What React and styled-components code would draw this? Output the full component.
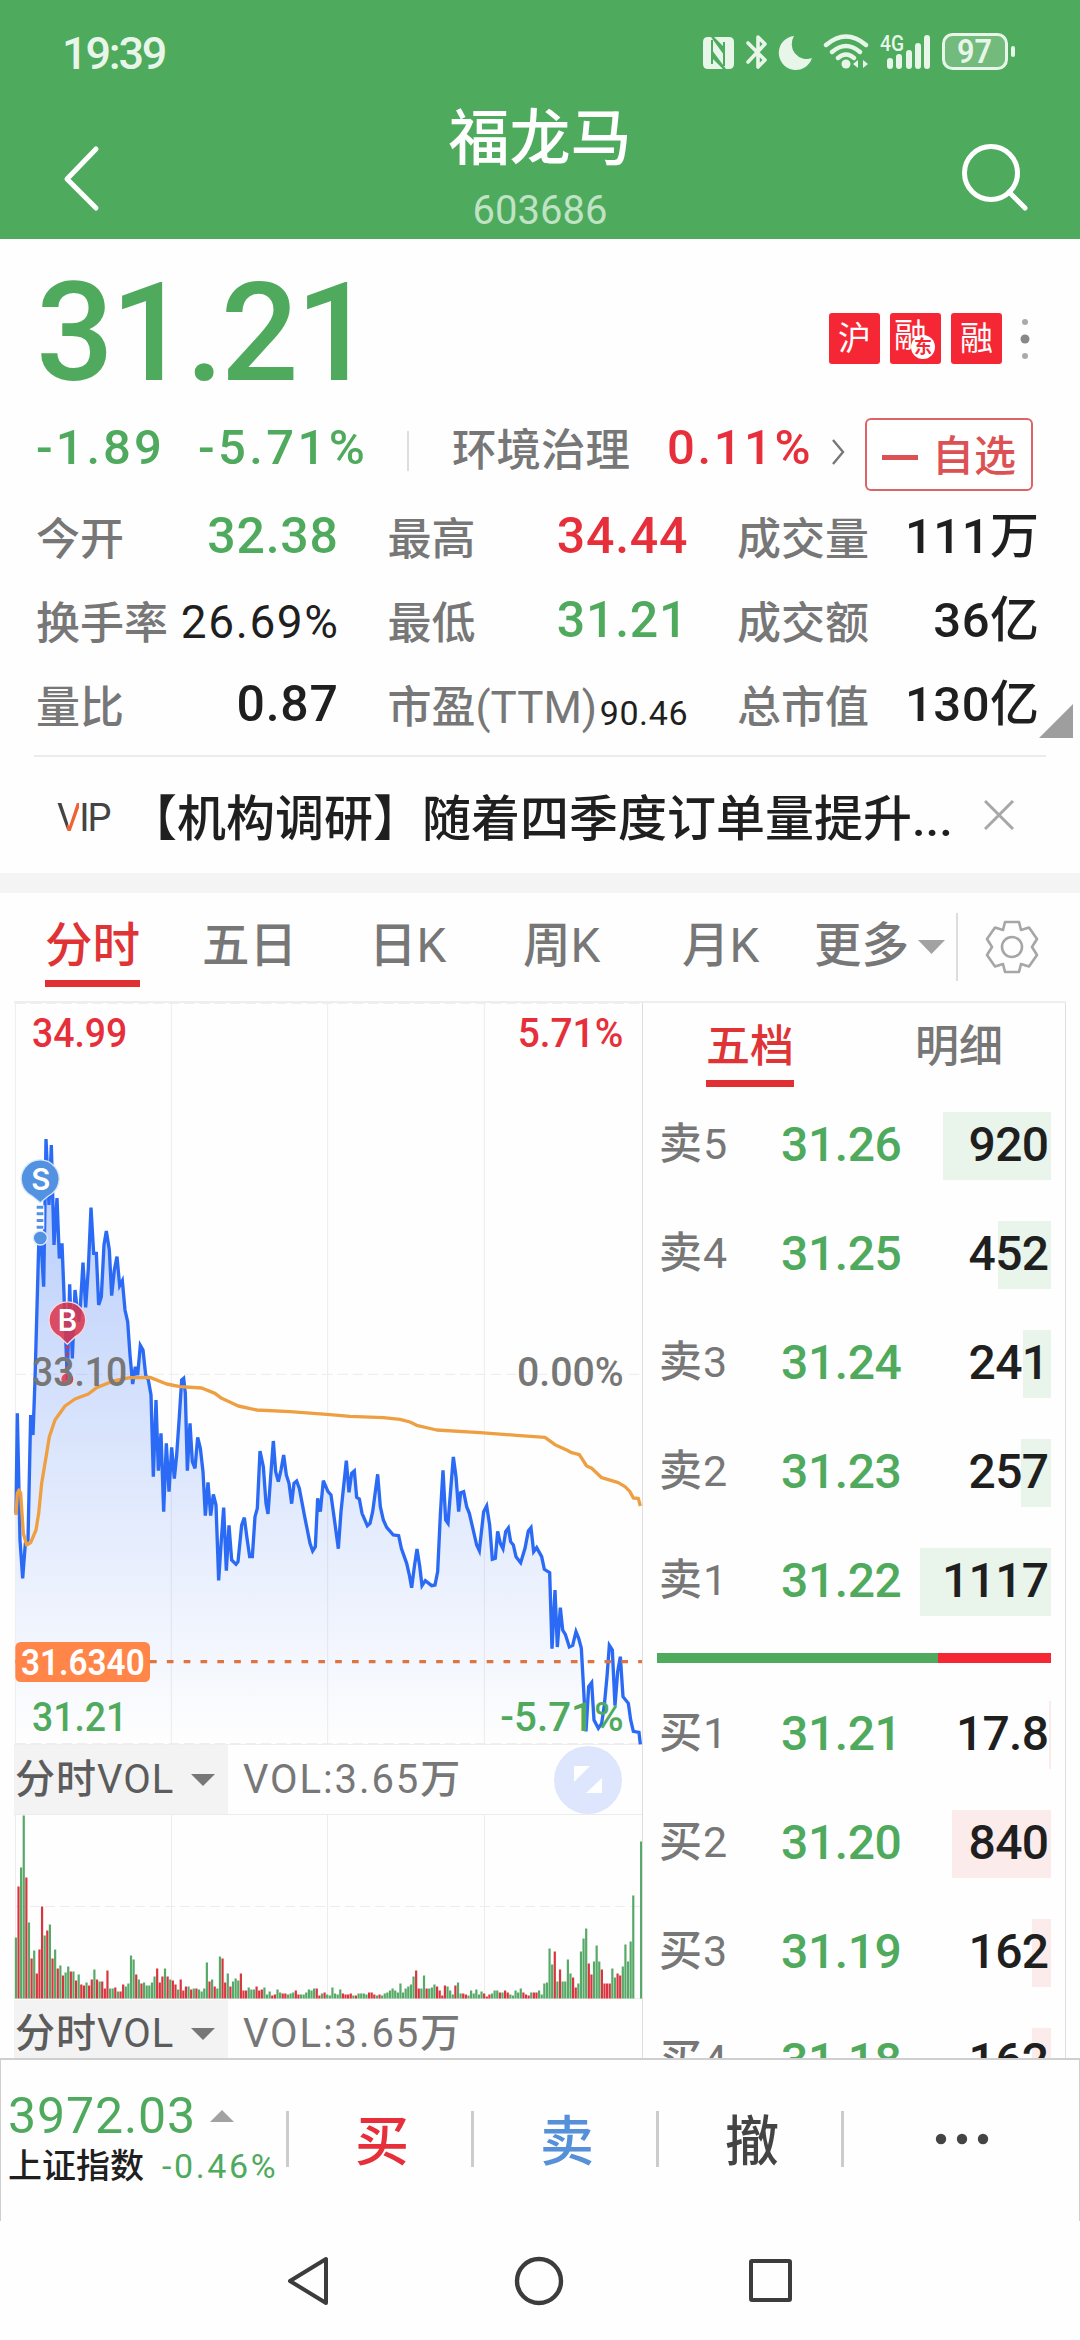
import React, { useState } from "react";
import styled, { createGlobalStyle } from "styled-components";

const GREEN = "#4faa5d";
const RED = "#e62f3a";
const GREY = "#777777";
const INK = "#1f1f1f";

const GlobalStyle = createGlobalStyle`
	* { box-sizing: border-box; }
	body {
		margin: 0;
		background: #fefefe;
		color: ${INK};
		font-family: Roboto, "Noto Sans CJK SC", sans-serif;
	}
	svg { display: block; flex: none; }
`;

const Page = styled.div`
	width: 1080px;
	height: 2340px;
	display: flex;
	flex-direction: column;
	overflow: hidden;
`;

// One piece of text; size, spacing and colour differ nearly everywhere
const Text = styled.span`
	font-size: ${(p) => p.$size}px;
	letter-spacing: ${(p) => p.$gap || 0}px;
	margin-right: ${(p) => -(p.$gap || 0)}px;
	color: ${(p) => p.$color || INK};
	font-weight: ${(p) => p.$weight || 400};
	line-height: ${(p) => p.$line || p.$size}px;
	white-space: nowrap;
`;

/* ---------- header ---------- */

const Header = styled.header`
	height: 239px;
	background: #4eaa5c;
`;

const StatusBar = styled.div`
	height: 106px;
	padding: 0 65px 0 62px;
	display: flex;
	align-items: center;
	justify-content: space-between;
`;

const StatusIcons = styled.div`
	display: flex;
	align-items: center;
`;

const TitleBar = styled.div`
	height: 133px;
	padding: 0 52px 0 62px;
	display: flex;
	justify-content: space-between;
`;

const Title = styled.div`
	display: flex;
	flex-direction: column;
	align-items: center;
	gap: 20px;
	margin: 2px 0 0 18px;
`;

const BackIcon = styled.svg`
	margin-top: 38px;
`;

const SearchIcon = styled.svg`
	margin-top: 35px;
`;

/* ---------- quote ---------- */

const Quote = styled.section`
	position: relative;
	height: 516px;
`;

const PriceRow = styled.div`
	height: 179px;
	padding: 10px 48px 0 36px;
	display: flex;
	align-items: center;
	justify-content: space-between;
`;

const Badges = styled.div`
	display: flex;
	align-items: center;
	gap: 10px;
	margin-top: 10px;
`;

const Badge = styled.div`
	position: relative;
	width: 51px;
	height: 51px;
	border-radius: 3px;
	background: #f62734;
	color: #fff;
	font-size: 33px;
	line-height: 51px;
	text-align: center;
	${(p) => p.$shifted && "padding-right: 10px; line-height: 45px;"}
`;

const BadgeDot = styled.span`
	position: absolute;
	right: 6px;
	bottom: 5px;
	width: 24px;
	height: 24px;
	border-radius: 50%;
	background: #fff;
	color: #f62734;
	font-size: 18px;
	font-weight: 700;
	line-height: 24px;
`;

const Dots = styled.svg`
	margin-left: 6px;
`;

const ChangeRow = styled.div`
	height: 73px;
	padding: 0 47px 0 36px;
	display: flex;
	align-items: flex-start;
`;

const Change = styled.div`
	width: ${(p) => p.$width}px;
	flex: none;
`;

const VLine = styled.i`
	flex: none;
	width: ${(p) => p.$w || 2}px;
	height: ${(p) => p.$h}px;
	background: ${(p) => p.$color || "#dddddd"};
`;

const ChangeDivider = styled(VLine)`
	margin: 13px 43px 0 0;
`;

const FavButton = styled.button`
	margin: 0 0 0 auto;
	width: 168px;
	height: 73px;
	padding: 5px 0 0 15px;
	display: flex;
	align-items: center;
	gap: 14px;
	border: 2px solid #dd6365;
	border-radius: 6px;
	background: #fff;
	font-family: inherit;
`;

const Minus = styled.i`
	width: 36px;
	height: 5px;
	background: #dc5254;
`;

const Stats = styled.div`
	margin: 2px 42px 0 36px;
	display: grid;
	grid-template-columns: 302px 300px 302px;
	column-gap: 49.5px;
	grid-auto-rows: 84px;
`;

const Stat = styled.div`
	display: flex;
	align-items: center;
	justify-content: space-between;
`;

const StatLabel = styled(Text)`
	position: relative;
	top: 5px;
`;

const StatValue = styled(Text)`
	position: relative;
	top: ${(p) => (p.$drop || 0) + 1}px;
`;

const Corner = styled.svg`
	position: absolute;
	left: 1039px;
	top: 465px;
`;

const News = styled.div`
	height: 118px;
	margin: 0 34px;
	padding-left: 23px;
	border-top: 2px solid #ececec;
	display: flex;
	align-items: center;
`;

const NewsText = styled(Text)`
	margin: 9px auto 0 17px;
`;

const Vip = styled.div`
	width: 54px;
	height: 40px;
	margin-top: 6px;
	display: flex;
	align-items: center;
	color: #444;
	font-size: 38px;
	font-weight: 400;
	letter-spacing: -2px;
	line-height: 40px;
`;

const VipV = styled.span`
	background: linear-gradient(100deg, #444 52%, #ee6236 53%);
	background-clip: text;
	-webkit-background-clip: text;
	color: transparent;
`;

const Band = styled.div`
	height: 20px;
	background: #f4f4f4;
`;

/* ---------- period tabs ---------- */

const Tabs = styled.nav`
	height: 108px;
	padding-left: 45px;
	display: flex;
	align-items: center;
`;

const Tab = styled.div`
	width: ${(p) => p.$width}px;
	height: 108px;
	padding-top: 30px;
	flex: none;
`;

const TabLabel = styled.span`
	display: inline-block;
	height: 64px;
	font-size: 47.5px;
	line-height: 47px;
	font-weight: ${(p) => (p.$active ? 500 : 450)};
	color: ${(p) => (p.$active ? "#df3336" : GREY)};
	border-bottom: ${(p) => (p.$active ? "7px solid #e03033" : "none")};
`;

const MoreTab = styled(Tab)`
	display: flex;
	gap: 9px;
`;

const MoreArrow = styled.svg`
	margin-top: 17px;
`;

const Gear = styled.svg`
	margin-left: 26px;
`;

/* ---------- chart and order book ---------- */

const Board = styled.main`
	height: 1057px;
	margin: 0 14px;
	border-top: 2px solid #eeeeee;
	display: flex;
	overflow: hidden;
`;

const Charts = styled.div`
	width: 628px;
	flex: none;
	margin-top: -2px;
`;

const VolumeBar = styled.div`
	height: ${(p) => p.$height}px;
	border-bottom: 1px solid #ececec;
	display: flex;
	align-items: center;
`;

const VolumePicker = styled.div`
	width: 214px;
	height: 69px;
	padding: 0 13px 0 1px;
	margin-right: 15px;
	display: flex;
	align-items: center;
	justify-content: space-between;
	background: #f3f3f3;
`;

const Expand = styled.svg`
	margin-left: auto;
	margin-right: 20px;
`;

const Book = styled.aside`
	width: 424px;
	border: solid #dedede;
	border-width: 0 1px;
	padding: 0 14px;
`;

const BookTabs = styled.div`
	height: 109px;
	padding: 15px 48px 0 49px;
	display: flex;
	justify-content: space-between;
`;

const BookTab = styled.div`
	height: 69px;
	padding-top: 3px;
	font-size: 44px;
	line-height: 52px;
	font-weight: ${(p) => (p.$active ? 500 : 450)};
	color: ${(p) => (p.$active ? "#df3336" : GREY)};
	border-bottom: ${(p) => (p.$active ? "7px solid #e03033" : "none")};
`;

const Level = styled.div`
	height: 68px;
	margin-bottom: 41px;
	padding: 0 2px 3px 2px;
	display: grid;
	grid-template-columns: 122px 1fr auto;
	align-items: center;
	background: linear-gradient(${(p) => p.$tint}, ${(p) => p.$tint}) right / ${(p) => p.$bar}px 68px no-repeat;
`;

const Ratio = styled.div`
	height: 10px;
	margin: -4px 0 38px;
	display: grid;
	grid-template-columns: 281fr 113fr;
	background: #f62734;
	&::before {
		content: "";
		background: #4faa5d;
	}
`;

/* ---------- bottom ---------- */

const Toolbar = styled.footer`
	height: 163px;
	border: solid #cfcfcf;
	border-width: 2px 1px 0;
	display: grid;
	grid-template-columns: 285px repeat(3, 185px) 1fr;
`;

const Index = styled.div`
	padding: 29px 0 0 7px;
`;

const IndexLine = styled.div`
	display: flex;
	align-items: center;
	gap: ${(p) => p.$space}px;
	height: ${(p) => p.$height}px;
`;

const Action = styled.div`
	height: 56px;
	margin-top: 51px;
	padding: ${(p) => (p.$icon ? 0 : "8px 0 0 4px")};
	border-left: 3px solid #cccccc;
	display: flex;
	align-items: center;
	justify-content: center;
`;

const NavBar = styled.div`
	height: 119px;
	padding: 0 287px 0 285px;
	display: flex;
	align-items: center;
	justify-content: space-between;
`;

const stats = [
	{ label: "今开", value: "32.38", color: GREEN, size: 50, gap: 0.8 },
	{ label: "最高", value: "34.44", color: RED, size: 50, gap: 0.8 },
	{ label: "成交量", value: "111万", size: 49, gap: 0.5 },
	{ label: "换手率", value: "26.69%", size: 46, gap: 1.6, weight: 450, drop: 2 },
	{ label: "最低", value: "31.21", color: GREEN, size: 50, gap: 0.8 },
	{ label: "成交额", value: "36亿", size: 49, gap: 0.5 },
	{ label: "量比", value: "0.87", size: 50, gap: 0.8 },
	{ label: "市盈(TTM)", value: "90.46", size: 34, gap: 0.6, weight: 450, drop: 9 },
	{ label: "总市值", value: "130亿", size: 49, gap: 0.5 },
];

const asks = [
	["卖5", "31.26", "920", 108],
	["卖4", "31.25", "452", 53],
	["卖3", "31.24", "241", 28],
	["卖2", "31.23", "257", 30],
	["卖1", "31.22", "1117", 131],
];

const bids = [
	["买1", "31.21", "17.8", 2],
	["买2", "31.20", "840", 99],
	["买3", "31.19", "162", 19],
	["买4", "31.18", "162", 19],
];

const price =
	"48,1540 52,1240 60,1620 68,1735 76,1630 84,1620 92,1245 99,1305 105,1140 116,740 124,740 131,860 138,417 147,615 154,435 162,735 171,594 178,775 186,730 202,1140 209,853 217,1075 225,870 236,965 241,920 249,788 257,922 265,805 273,623 281,760 289,760 296,915 304,890 312,735 319,693 328,750 335,887 343,810 351,770 359,857 367,842 375,930 383,965 390,1065 398,1152 406,1100 413,1125 421,1036 429,1050 437,1125 445,1140 453,1185 460,1430 468,1200 475,1412 483,1300 491,1535 499,1330 507,1475 515,1342 523,1436 530,1365 538,1250 545,1140 551,1135 556,1180 562,1412 570,1270 577,1385 585,1405 593,1312 601,1345 609,1415 616,1547 624,1447 632,1547 640,1483 648,1515 656,1741 664,1620 671,1523 679,1712 687,1576 695,1680 708,1693 714,1685 725,1575 733,1553 741,1615 749,1670 757,1670 765,1550 772,1525 780,1353 790,1400 798,1510 804,1542 812,1430 820,1323 827,1415 835,1445 843,1410 851,1365 859,1425 867,1450 875,1511 882,1450 890,1443 898,1465 914,1550 930,1630 938,1653 946,1640 953,1495 961,1535 970,1442 984,1475 993,1485 1000,1535 1015,1646 1023,1535 1039,1382 1047,1477 1055,1420 1063,1413 1070,1492 1078,1497 1086,1540 1102,1577 1110,1570 1118,1535 1133,1423 1141,1520 1150,1560 1160,1582 1180,1605 1196,1607 1204,1645 1220,1690 1228,1725 1235,1763 1243,1700 1251,1647 1259,1698 1266,1757 1276,1742 1295,1757 1305,1755 1313,1715 1321,1545 1329,1411 1337,1560 1344,1570 1352,1470 1360,1371 1368,1430 1376,1535 1382,1478 1391,1475 1400,1520 1408,1540 1415,1570 1430,1635 1438,1652 1451,1535 1460,1518 1469,1575 1477,1678 1486,1675 1493,1594 1501,1630 1509,1646 1517,1595 1525,1584 1532,1625 1540,1635 1548,1670 1562,1688 1575,1645 1585,1593 1593,1583 1601,1655 1610,1643 1625,1670 1633,1708 1649,1718 1656,1946 1665,1770 1672,1941 1681,1823 1688,1890 1696,1903 1708,1941 1718,1936 1728,1895 1736,1915 1744,1945 1758,2194 1766,2060 1775,2048 1782,2160 1795,2185 1805,2170 1813,2115 1821,2030 1828,1936 1837,1950 1845,2117 1853,2015 1861,1970 1869,2090 1885,2110 1892,2160 1900,2194 1917,2197 1921,2233";

const average =
	"48,1545 52,1480 57,1470 62,1480 70,1600 80,1635 92,1628 108,1590 116,1540 125,1450 140,1360 148,1310 165,1260 195,1218 225,1197 265,1182 290,1163 340,1143 390,1133 450,1132 500,1152 540,1160 605,1164 645,1180 665,1195 715,1218 770,1230 870,1235 950,1241 990,1244 1050,1249 1150,1253 1200,1258 1230,1266 1250,1276 1310,1290 1440,1298 1550,1306 1635,1312 1665,1334 1700,1350 1715,1358 1738,1364 1760,1398 1775,1405 1805,1433 1855,1448 1875,1460 1890,1475 1900,1494 1915,1495 1921,1518";

// g = falling minute, r = rising minute, number = bar height
const volume =
	"g61 r112 g131 g183 r121 g76 r40 g48 r25 r49 r92 g63 r68 g74 r40 g49 r30 g33 r23 g26 g32 r27 g27 r18 g24 r14 r13 g16 r13 r19 g29 r19 g17 r17 r10 r28 g10 g10 r11 g7 r7 r14 g12 g15 g43 g39 r24 g19 r15 g16 g13 g13 g16 g22 r30 r16 r22 g30 r22 g19 r18 r14 g9 r19 r8 r12 g12 r9 g10 r10 g9 g7 g10 g36 r17 g19 r12 g10 g42 r40 r16 g25 r12 g17 g20 g18 r25 r8 r8 g11 g9 g9 r12 r8 r9 g11 g4 g7 r3 r4 g9 g6 r5 r5 g4 g5 g6 r8 r4 g4 g4 g6 g9 g8 g10 r10 r3 g5 r6 g4 g3 g11 g5 g4 g9 r5 r4 r4 r5 g3 r3 g5 g5 g5 g4 r6 r6 r4 g3 r4 g3 g5 g6 g8 g10 g8 g6 g15 g6 g10 g12 g14 g22 r28 r10 g10 g23 r10 g10 g11 g14 r12 r8 r3 r13 g12 g8 g4 r13 g16 g5 r5 r4 g3 g8 g5 g9 g4 g7 r5 r2 r4 g5 g8 g8 r6 g6 r8 r6 g4 g3 g8 g6 g10 r6 r4 r3 g6 r6 r6 g8 g4 g15 g16 g50 g34 r47 g17 r29 g17 g17 g39 g25 r21 r11 g15 g47 g60 g70 r35 r24 g37 g53 g37 r29 r15 r15 r15 g30 g21 r25 r23 g32 g54 g37 g57 g103 g0 g0 g157"
		.split(" ")
		.map((bar) => ({ color: bar[0] === "g" ? "#57a968" : "#d8363f", height: Number(bar.slice(1)) }));

function PriceChart() {
	return (
		<svg width="629" height="744" viewBox="42 3 1887 2232">
			<defs>
				<linearGradient id="fill" gradientUnits="userSpaceOnUse" x1="0" y1="420" x2="0" y2="2235">
					<stop offset="0" stopColor="#2b6af5" stopOpacity="0.34" />
					<stop offset="1" stopColor="#2b6af5" stopOpacity="0" />
				</linearGradient>
			</defs>
			<g stroke="#ececec" strokeWidth="3" fill="none">
				<path d="M46 3V2235M514 9V2235M983 9V2235M1453 9V2235M42 2234H1929" />
				<path d="M46 10H1926M46 1123H1926M46 2231H1926" strokeDasharray="32 14" />
			</g>
			<polygon points={`48,2235 ${price} 1921,2235`} fill="url(#fill)" />
			<polyline points={price} fill="none" stroke="#2b6af5" strokeWidth="10" />
			<polyline points={average} fill="none" stroke="#ee9f42" strokeWidth="10" strokeLinejoin="round" />
			<path d="M46 1985H1926" stroke="#de7440" strokeWidth="10" strokeDasharray="20 30.5" />

			<g stroke="#dbe8fb" strokeWidth="4" fill="#5292e0">
				<path d="M121 608L96 588A57 57 0 1 1 145 588Z" />
				<circle cx="121" cy="714" r="21" />
			</g>
			<path d="M120 616V688" stroke="#fff" strokeWidth="26" />
			<path d="M120 617V688" stroke="#5292e0" strokeWidth="20" strokeDasharray="9 11" />
			<g stroke="#f7d7de" strokeWidth="4" fill="#dc3449" fillOpacity="0.86">
				<path d="M202 1033L178 1010A55 55 0 1 1 226 1010Z" />
				<circle cx="202" cy="1138" r="20" />
			</g>
			<path d="M202 1038V1115" stroke="#c9395c" strokeWidth="11" strokeDasharray="9 11" />

			<rect x="46" y="1926" width="404" height="120" rx="16" fill="#ff8549" />
			<g fontSize="122" fontWeight="500">
				<text x="96" y="140" fill={RED} textLength="286" lengthAdjust="spacingAndGlyphs">34.99</text>
				<text x="1870" y="140" fill={RED} textAnchor="end" textLength="317" lengthAdjust="spacingAndGlyphs">5.71%</text>
				<text x="96" y="1158" fill={GREY} textLength="286" lengthAdjust="spacingAndGlyphs">33.10</text>
				<text x="1871" y="1158" fill={GREY} textAnchor="end" textLength="320" lengthAdjust="spacingAndGlyphs">0.00%</text>
				<text x="96" y="2192" fill={GREEN} textLength="286" lengthAdjust="spacingAndGlyphs">31.21</text>
				<text x="1871" y="2192" fill={GREEN} textAnchor="end" textLength="370" lengthAdjust="spacingAndGlyphs">-5.71%</text>
			</g>
			<text x="63" y="2026" fontSize="112" fontWeight="600" fill="#fff" textLength="371" lengthAdjust="spacingAndGlyphs">31.6340</text>
			<g fill="#fff" fontSize="88" fontWeight="600" textAnchor="middle" fontFamily="Inter, sans-serif">
				<text x="122" y="571">S</text>
				<text x="202" y="994">B</text>
			</g>
		</svg>
	);
}

function VolumeChart() {
	return (
		<svg width="629" height="184" viewBox="0 0 629 184">
			<g stroke="#ececec" fill="none">
				<path d="M1.5 0V184M157.5 0V184M313.5 0V184M470.5 0V184M0 183.5H628" />
				<path d="M1 91.5H628" strokeDasharray="10 5" />
			</g>
			{volume.map((bar, i) => (
				<rect key={i} x={0.8 + i * 2.616} y={183.5 - bar.height} width="2.2" height={bar.height} fill={bar.color} />
			))}
		</svg>
	);
}

function VolumeHeader({ height, expand }) {
	return (
		<VolumeBar $height={height}>
			<VolumePicker>
				<Text $size={40} $gap={1} $weight={450} $color="#5c5c5c">分时VOL</Text>
				<svg width="24" height="12" viewBox="0 0 24 12">
					<path d="M0 0H24L12 12Z" fill="#777" />
				</svg>
			</VolumePicker>
			<Text $size={40} $gap={1.9} $weight={450} $color={GREY}>VOL:3.65万</Text>
			{expand && (
				<Expand width="68" height="68" viewBox="0 0 68 68">
					<circle cx="34" cy="34" r="34" fill="#dde6fd" />
					<path d="M20 20H36L20 36ZM48 32V47H32Z" fill="#fff" />
				</Expand>
			)}
		</VolumeBar>
	);
}

function Levels({ levels, tint }) {
	return levels.map(([label, quote, amount, bar]) => (
		<Level key={label} $tint={tint} $bar={bar}>
			<Text $size={43} $gap={1} $weight={450} $color={GREY}>{label}</Text>
			<Text $size={48} $gap={-0.4} $weight={500} $color={GREEN}>{quote}</Text>
			<Text $size={48} $gap={-0.7} $weight={500}>{amount}</Text>
		</Level>
	));
}

function SystemIcons() {
	return (
		<StatusIcons>
			<svg width="312" height="40" viewBox="703 33 312 40" fill="none" stroke="#e8f6ea">
				<g stroke="none" fill="#e8f6ea">
					<path d="M708 37H711L724 55V47L714 37H729Q734 37 734 42V64Q734 69 729 69H726L712 50V58L723 69H708Q703 69 703 64V42Q703 37 708 37Z" />
					<path d="M794 36A17 17 0 1 0 812 58A15 15 0 0 1 794 36Z" />
					<circle cx="846" cy="64" r="4.5" />
					<path d="M853 64L858 60V68ZM868 64L863 60V68Z" />
					<rect x="887" y="58" width="6" height="11" rx="3" />
					<rect x="896" y="54" width="6" height="15" rx="3" />
					<rect x="906" y="50" width="6" height="19" rx="3" />
					<rect x="915" y="43" width="6" height="26" rx="3" />
					<rect x="924" y="35" width="6" height="34" rx="3" />
					<rect x="1011" y="46" width="4" height="11" rx="2" />
				</g>
				<path d="M712 40V64M724 42V66" stroke="#4eaa5c" strokeWidth="2" />
				<path d="M748 43L765 60L758 67V37L765 44L748 62" strokeWidth="3.6" strokeLinejoin="round" strokeLinecap="round" />
				<path d="M826 45Q846 28 866 45M832 52Q846 40 860 52M838 58Q846 51 854 58" strokeWidth="4.4" strokeLinecap="round" />
				<rect x="943.5" y="34.5" width="63" height="34" rx="9" strokeWidth="3" fill="#72bb7d" />
				<g stroke="none" fill="#e8f6ea" fontWeight="500">
					<text x="880" y="51" fontSize="22" textLength="24" lengthAdjust="spacingAndGlyphs">4G</text>
					<text x="957" y="63" fontSize="33" fontWeight="600" textLength="35" lengthAdjust="spacingAndGlyphs">97</text>
				</g>
			</svg>
		</StatusIcons>
	);
}

export default function App() {
	const [period, setPeriod] = useState("分时");
	const periods = [["分时", 157], ["五日", 167], ["日K", 154], ["周K", 159], ["月K", 132]];

	return (
		<Page lang="zh-CN">
			<GlobalStyle />
			<Header>
				<StatusBar>
					<Text $size={45} $gap={-2.2} $weight={500} $color="#e8f6ea">19:39</Text>
					<SystemIcons />
				</StatusBar>
				<TitleBar>
					<BackIcon width="40" height="70" viewBox="0 0 40 70">
						<path d="M34 5L5 35L34 64" fill="none" stroke="#fff" strokeWidth="5" strokeLinecap="round" strokeLinejoin="round" />
					</BackIcon>
					<Title>
						<Text $size={61} $line={62} $weight={500} $color="#fff">福龙马</Text>
						<Text $size={40} $line={42} $weight={450} $color="#bfe3c4">603686</Text>
					</Title>
					<SearchIcon width="68" height="72" viewBox="0 0 68 72">
						<g fill="none" stroke="#fff" strokeWidth="5" strokeLinecap="round">
							<circle cx="31" cy="32" r="26.5" />
							<path d="M49 51L65 67" />
						</g>
					</SearchIcon>
				</TitleBar>
			</Header>

			<Quote>
				<PriceRow>
					<Text $size={137} $gap={-3} $weight={500} $color={GREEN}>31.21</Text>
					<Badges>
						<Badge>沪</Badge>
						<Badge $shifted>
							融<BadgeDot>东</BadgeDot>
						</Badge>
						<Badge>融</Badge>
						<Dots width="14" height="44" viewBox="0 0 14 44" fill="#aaa">
							<circle cx="7" cy="5" r="3" />
							<circle cx="7" cy="22" r="4.5" fill="#888" />
							<circle cx="7" cy="39" r="3" />
						</Dots>
					</Badges>
				</PriceRow>
				<ChangeRow>
					<Change $width={162}><Text $size={49} $gap={3} $line={60} $weight={500} $color={GREEN}>-1.89</Text></Change>
					<Change $width={209}><Text $size={49} $gap={3.4} $line={60} $weight={500} $color={GREEN}>-5.71%</Text></Change>
					<ChangeDivider $h={40} />
					<Change $width={215}><Text $size={44.5} $line={66} $weight={450} $color={GREY}>环境治理</Text></Change>
					<Change $width={163}><Text $size={49} $gap={2.6} $line={60} $weight={500} $color={RED}>0.11%</Text></Change>
					<svg width="16" height="66" viewBox="0 0 16 66">
						<path d="M3 22L13 34L3 46" fill="none" stroke="#777" strokeWidth="2.4" />
					</svg>
					<FavButton>
						<Minus />
						<Text $size={42} $weight={500} $color="#dc5254">自选</Text>
					</FavButton>
				</ChangeRow>
				<Stats>
					{stats.map((s) => (
						<Stat key={s.label}>
							<StatLabel $size={44} $weight={450} $color={GREY}>{s.label}</StatLabel>
							<StatValue $size={s.size} $gap={s.gap} $weight={s.weight || 500} $color={s.color} $drop={s.drop}>{s.value}</StatValue>
						</Stat>
					))}
				</Stats>
				<Corner width="34" height="34" viewBox="0 0 34 34">
					<path d="M34 0V34H0Z" fill="#9e9e9e" />
				</Corner>
			</Quote>

			<News>
				<Vip><VipV>V</VipV>IP</Vip>
				<NewsText $size={49} $weight={500}>【机构调研】随着四季度订单量提升...</NewsText>
				<svg width="62" height="30" viewBox="0 0 62 30">
					<path d="M1 1L29 29M29 1L1 29" stroke="#a8a8a8" strokeWidth="3" />
				</svg>
			</News>
			<Band />

			<Tabs>
				{periods.map(([name, width]) => (
					<Tab key={name} $width={width} onClick={() => setPeriod(name)}>
						<TabLabel $active={name === period}>{name}</TabLabel>
					</Tab>
				))}
				<MoreTab $width={142}>
					<TabLabel>更多</TabLabel>
					<MoreArrow width="27" height="14" viewBox="0 0 27 14">
						<path d="M0 0H27L13.500 14Z" fill="#a2a2a2" />
					</MoreArrow>
				</MoreTab>
				<VLine $h={68} />
				<Gear width="56" height="56" viewBox="-28 -28 56 56" fill="none" stroke="#a6a6a6" strokeWidth="2.6" strokeLinejoin="round">
					<path d="M-7 -25H7L9 -17L17 -19.500L25 -8L20 0L25 8L17 19.500L9 17L7 25H-7L-9 17L-17 19.500L-25 8L-20 0L-25 -8L-17 -19.500L-9 -17Z" />
					<circle r="10" />
				</Gear>
			</Tabs>

			<Board>
				<Charts>
					<PriceChart />
					<VolumeHeader height={70} expand />
					<VolumeChart />
					<VolumeHeader height={71} />
				</Charts>
				<Book>
					<BookTabs>
						<BookTab $active>五档</BookTab>
						<BookTab>明细</BookTab>
					</BookTabs>
					<Levels levels={asks} tint="#e9f4eb" />
					<Ratio />
					<Levels levels={bids} tint="#fcebeb" />
				</Book>
			</Board>

			<Toolbar>
				<Index>
					<IndexLine $height={54} $space={15}>
						<Text $size={50} $gap={0.9} $weight={450} $color={GREEN}>3972.03</Text>
						<svg width="24" height="12" viewBox="0 0 24 12">
							<path d="M0 12H24L12 0Z" fill="#a2a2a2" />
						</svg>
					</IndexLine>
					<IndexLine $height={46} $space={18}>
						<Text $size={34} $weight={450}>上证指数</Text>
						<Text $size={34} $gap={2.6} $weight={450} $color={GREEN}>-0.46%</Text>
					</IndexLine>
				</Index>
				<Action><Text $size={54} $weight={500} $color={RED}>买</Text></Action>
				<Action><Text $size={54} $weight={500} $color="#5590d8">卖</Text></Action>
				<Action><Text $size={54} $weight={500} $color="#444">撤</Text></Action>
				<Action $icon>
					<svg width="54" height="12" viewBox="0 0 54 12" fill="#444">
						<circle cx="6" cy="6" r="5.200" />
						<circle cx="27" cy="6" r="5.200" />
						<circle cx="48" cy="6" r="5.200" />
					</svg>
				</Action>
			</Toolbar>

			<NavBar>
				<svg width="48" height="52" viewBox="0 0 48 52">
					<path d="M41 4V48L5 26Z" fill="none" stroke="#3c3c3c" strokeWidth="4" strokeLinejoin="round" />
				</svg>
				<svg width="50" height="50" viewBox="0 0 50 50">
					<circle cx="25" cy="25" r="22" fill="none" stroke="#3c3c3c" strokeWidth="4.400" />
				</svg>
				<svg width="48" height="48" viewBox="0 0 48 48">
					<rect x="6" y="4" width="39" height="39" rx="1" fill="none" stroke="#3c3c3c" strokeWidth="4" />
				</svg>
			</NavBar>
		</Page>
	);
}
